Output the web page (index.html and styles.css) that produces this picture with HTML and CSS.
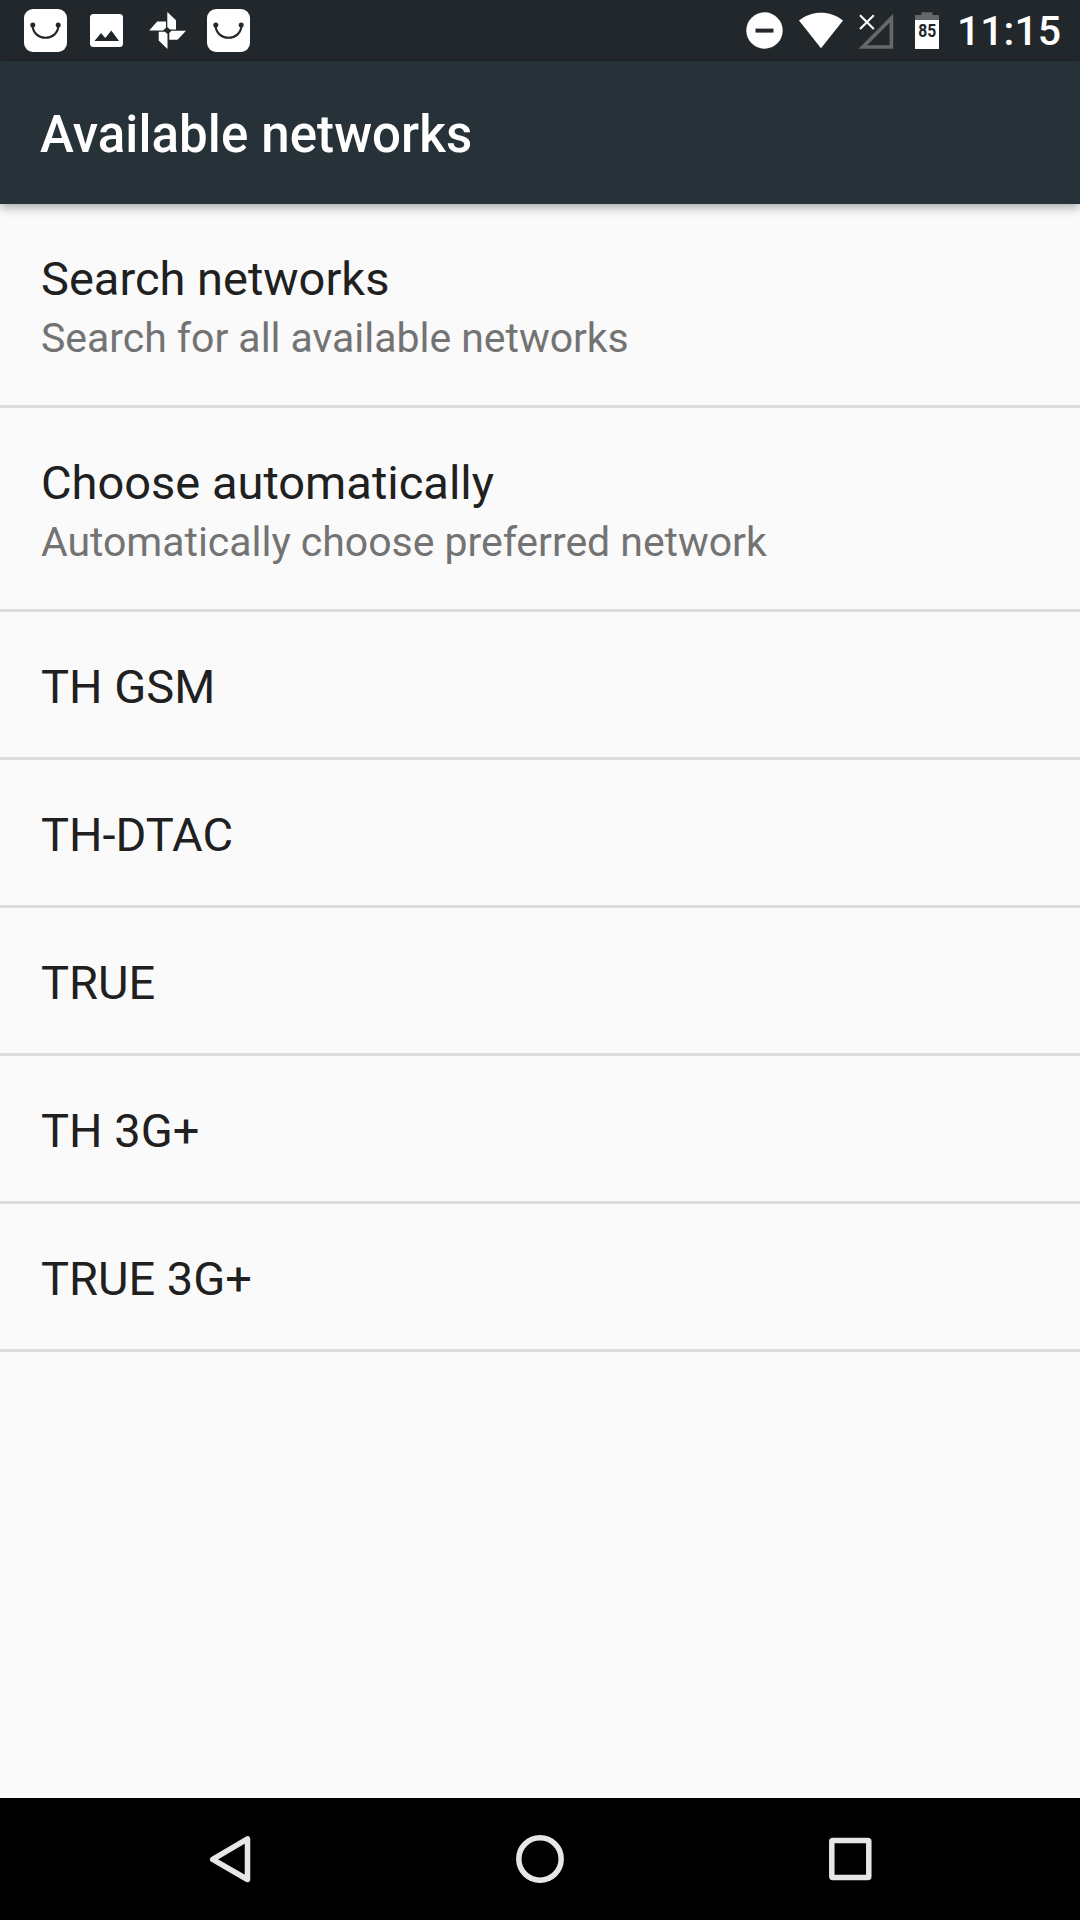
FILE: index.html
```
<!DOCTYPE html>
<html lang="en">
<head>
  <meta charset="UTF-8">
  <meta name="viewport" content="width=device-width, initial-scale=1.0">
  <title>Available networks</title>
  <link rel="stylesheet" href="styles.css">
</head>
<body>
  <div class="screen">
    <div class="status-bar">
      <div class="notifications">
        <svg class="icon" viewBox="0 0 61 61">
          <rect x="9" y="9" width="43" height="43" rx="9" fill="#fff"/>
          <path d="M17.500 25C18 42 43 42 43.500 25" fill="none" stroke="#21272b" stroke-width="2.200"/>
          <circle cx="17.800" cy="25" r="2.500" fill="#21272b"/>
          <circle cx="43.200" cy="25" r="2.500" fill="#21272b"/>
        </svg>
        <svg class="icon" viewBox="0 0 61 61">
          <rect x="14" y="14" width="33" height="33" rx="3.500" fill="#fff"/>
          <path d="M18.500 41L25 33L29.300 38L35.300 30.500L43 41Z" fill="#21272b"/>
        </svg>
        <svg class="icon" viewBox="0 0 61 61" fill="#fff">
          <path d="M30.300 12L39 20.200V29.500H33L30.300 27Z"/>
          <path d="M49 30.700L40.500 39.700H32.300V33L34.500 30.700Z"/>
          <path d="M30.500 49L21.700 40.500V31.700H28L30.500 34Z"/>
          <path d="M12.200 30.500L20.200 21.600H29V27.700L26 30.500Z"/>
        </svg>
        <svg class="icon" viewBox="0 0 61 61">
          <rect x="9" y="9" width="43" height="43" rx="9" fill="#fff"/>
          <path d="M17.500 25C18 42 43 42 43.500 25" fill="none" stroke="#21272b" stroke-width="2.200"/>
          <circle cx="17.800" cy="25" r="2.500" fill="#21272b"/>
          <circle cx="43.200" cy="25" r="2.500" fill="#21272b"/>
        </svg>
      </div>
      <div class="system">
        <svg class="dnd" viewBox="0 0 38 61">
          <circle cx="19.500" cy="30.500" r="18.200" fill="#fff"/>
          <rect x="10.500" y="28.600" width="18" height="4" fill="#21272b"/>
        </svg>
        <svg class="wifi" viewBox="0 0 46 61">
          <path d="M1 20.500C14 10.200 32 10.200 45 20.500L23 48.300Z" fill="#fff"/>
        </svg>
        <svg class="signal" viewBox="0 0 38 61">
          <path d="M5.800 47L34.400 18.200V47Z" fill="none" stroke="#646869" stroke-width="3.600"/>
          <path d="M3 15.200L16.800 29M16.800 15.200L3 29" fill="none" stroke="#fff" stroke-width="2.100"/>
        </svg>
        <svg class="battery" viewBox="0 0 24 61">
          <path d="M6.500 12.300H17.500V15H24V20H0V15H6.500Z" fill="#646869"/>
          <rect y="20" width="24" height="29" fill="#fff"/>
          <text class="battery-level" x="3.200" y="37.300" textLength="18" lengthAdjust="spacingAndGlyphs">85</text>
        </svg>
        <span class="clock">11:15</span>
      </div>
    </div>

    <div class="app-bar">
      <h1>Available networks</h1>
    </div>

    <ul class="list">
      <li class="item two-line">
        <div class="title">Search networks</div>
        <div class="summary">Search for all available networks</div>
      </li>
      <li class="item two-line">
        <div class="title">Choose automatically</div>
        <div class="summary">Automatically choose preferred network</div>
      </li>
      <li class="item"><div class="title">TH GSM</div></li>
      <li class="item"><div class="title">TH-DTAC</div></li>
      <li class="item"><div class="title">TRUE</div></li>
      <li class="item"><div class="title">TH 3G+</div></li>
      <li class="item"><div class="title">TRUE 3G+</div></li>
    </ul>

    <div class="nav-bar">
      <svg class="nav-icon" viewBox="0 0 60 60">
        <path d="M12.700 30.300L47.500 9.800V50.500Z"/>
      </svg>
      <svg class="nav-icon" viewBox="0 0 60 60">
        <circle cx="30" cy="30" r="21.200"/>
      </svg>
      <svg class="nav-icon" viewBox="0 0 60 60">
        <rect x="11.800" y="11.500" width="37" height="37" rx="1"/>
      </svg>
    </div>
  </div>
</body>
</html>
```

FILE: styles.css
```
* {
  box-sizing: border-box;
}

body {
  margin: 0;
  font-family: Roboto, 'Noto Sans', sans-serif;
  background-color: #fafafa;
}

.screen {
  width: 1080px;
  height: 1920px;
  display: flex;
  flex-direction: column;
  overflow: hidden;
}

/* status bar */
.status-bar {
  height: 61px;
  display: flex;
  justify-content: space-between;
  padding: 0 19px 0 15px;
  background-color: #21272b;
}

.notifications,
.system {
  display: flex;
}

.icon {
  width: 61px;
  height: 61px;
}

.dnd,
.signal {
  width: 38px;
  height: 61px;
}

.wifi {
  width: 46px;
  height: 61px;
  margin: 0 13px 0 15px;
}

.battery {
  width: 24px;
  height: 61px;
  margin: 0 18px 0 20px;
}

.battery-level {
  font-size: 19px;
  font-weight: 700;
  fill: #21272b;
}

.clock {
  color: #fff;
  font-size: 41px;
  font-weight: 500;
  line-height: 63px;
}

/* title */
.app-bar {
  height: 143px;
  padding: 44px 40px 0;
  background-color: #263238;
  box-shadow: 0 3px 10px rgba(0, 0, 0, 0.35);
}

.app-bar h1 {
  margin: 0;
  color: #fff;
  font-size: 51px;
  font-weight: 500;
  line-height: 60px;
  letter-spacing: 0.1px;
}

/* networks */
.list {
  flex: 1;
  margin: 0;
  padding: 0;
  list-style: none;
}

.item {
  height: 148px;
  padding: 47px 41px 0;
  border-bottom: 3px solid #dcdcdc;
}

.two-line {
  height: 204px;
}

.title {
  color: #202020;
  font-size: 47px;
  line-height: 55px;
}

.summary {
  margin-top: 8px;
  color: #737373;
  font-size: 41px;
  line-height: 48px;
  letter-spacing: -0.04px;
}

/* navigation */
.nav-bar {
  height: 122px;
  display: flex;
  justify-content: center;
  align-items: center;
  gap: 250px;
  background-color: #000;
}

.nav-icon {
  width: 60px;
  height: 60px;
  fill: none;
  stroke: #e6e6e6;
  stroke-width: 5.5;
  stroke-linejoin: round;
}
```
